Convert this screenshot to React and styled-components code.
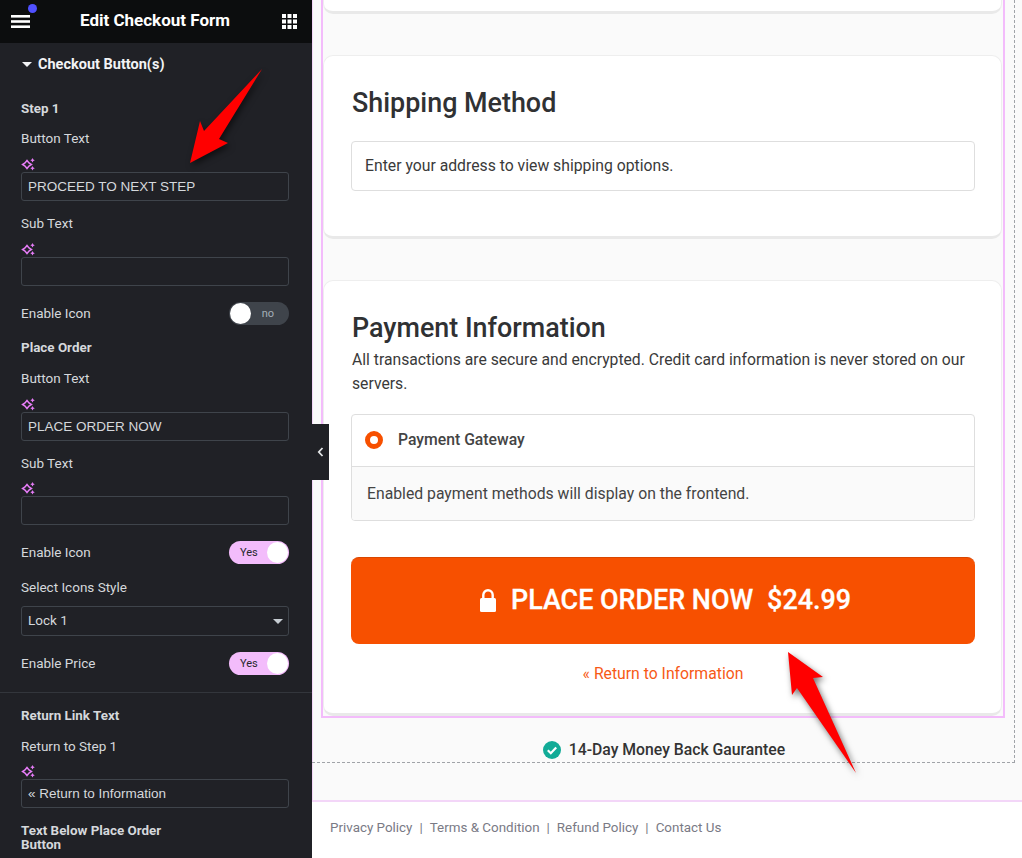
import React from "react";
import styled, { createGlobalStyle } from "styled-components";

const Global = createGlobalStyle`
  html, body { margin: 0; padding: 0; background: #fff; }
  body { font-family: Roboto, "Liberation Sans", sans-serif; }
  * { box-sizing: border-box; }
`;
const Page = styled.div`
  position: relative; display: flex; width: 1022px; height: 858px; overflow: hidden;
`;
const Sidebar = styled.aside`
  width: 312px; flex: none; height: 858px; background: #202126; color: #d5d8dc; font-size: 13.5px;
`;
const Header = styled.header`
  height: 43px; background: #0c0d0e; position: relative;
  display: flex; align-items: center; justify-content: space-between; padding: 0 15px 0 11px;
`;
const HeaderTitle = styled.h1`
  margin: 0 2px 4px 0; font-size: 17px; font-weight: 700; color: #fff; line-height: 40px;
`;
const Dot = styled.span`
  position: absolute; left: 27.5px; top: 3.5px; width: 9px; height: 9px; border-radius: 50%; background: #5050ff;
`;
const Controls = styled.div`
  padding: 0 23px 0 21px;
`;
const SectionTitle = styled.div`
  display: flex; align-items: center; gap: 6px; height: 16px; margin-top: 13px;
  font-size: 14.5px; font-weight: 700; color: #f2f3f5;
`;
const Caret = styled.span`
  width: 0; height: 0; border-left: 5px solid transparent; border-right: 5px solid transparent; border-top: 5px solid #f2f3f5; margin-left: 1px;
`;
const Heading = styled.div`
  font-size: 13.4px; font-weight: 700; line-height: 14px; color: #d5d8dc; margin-top: ${p => p.$mt}px;
`;
const Label = styled.div`
  font-size: 13.5px; line-height: 16px; color: #d5d8dc; margin-top: ${p => p.$mt}px;
`;
const SparkRow = styled.div`
  height: 14px; margin-top: ${p => p.$mt}px; display: flex; align-items: center;
`;
const Input = styled.input`
  display: block; width: 100%; height: 29px; margin: 1px 0 0; padding: 0 6px;
  background: transparent; border: 1px solid #3f444b; border-radius: 3px; outline: none;
  font: 13.5px "Liberation Sans", Arial, sans-serif; color: #d5d8dc;
`;
const Switcher = styled.div`
  display: flex; align-items: center; justify-content: space-between; height: 23px; margin-top: ${p => p.$mt}px;
`;
const SwitchLabel = styled.span`
  padding-bottom: 2px;
`;
const Toggle = styled.div`
  width: 60px; height: 23px; border-radius: 12px; padding: 1px; display: flex; align-items: center;
  flex-direction: ${p => (p.$on ? "row" : "row-reverse")}; justify-content: space-between;
  background: ${p => (p.$on ? "#f3bcfb" : "#3f444b")};
`;
const ToggleText = styled.span`
  font-size: 11px; color: ${p => (p.$on ? "#26292c" : "#a4afb7")};
  margin: ${p => (p.$on ? "0 0 0 10px" : "0 14px 0 0")};
`;
const Knob = styled.span`
  width: 21px; height: 21px; border-radius: 50%; background: #fff;
`;
const SelectBox = styled.div`
  height: 30px; margin-top: 11px; border: 1px solid #3f444b; border-radius: 3px; padding: 0 6px 2px;
  display: flex; align-items: center; justify-content: space-between; color: #d5d8dc; font-size: 13.5px;
`;
const SelectCaret = styled.span`
  width: 0; height: 0; border-left: 5px solid transparent; border-right: 5px solid transparent; border-top: 5px solid #c6ccd2; margin: 2px -1px 0 0;
`;
const Divider = styled.hr`
  margin: 17px 0 0; border: 0; border-top: 1px solid #33363c;
`;
const CollapseTab = styled.div`
  position: absolute; left: 312px; top: 424px; width: 17px; height: 56px; background: #202126;
  display: flex; align-items: center; justify-content: center; z-index: 2;
`;
const Main = styled.main`
  flex: 1; display: flex; flex-direction: column; height: 858px;
`;
const Canvas = styled.div`
  height: 802px; flex: none; background: #fafafa; border-bottom: 2px solid #f3d6f8;
  box-shadow: inset 1px 0 0 #f3d6f8;
`;
const DashedArea = styled.div`
  width: 703px; height: 763px; border-right: 1px dashed #a0a3a8; border-bottom: 1px dashed #a0a3a8;
  padding-left: 9px;
`;
const PinkFrame = styled.div`
  width: 684px; height: 718px; border: 2px solid #f3bcfb; border-top: 0; padding-right: 1px; display: flex; flex-direction: column;
  background: #fafafa;
`;
const Card = styled.section`
  background: #fff; border: 1px solid #eeeeee; border-bottom: 3px solid #e9e9e9; border-radius: 10px;
  padding: 0 26px 0 27px; height: ${p => p.$h}px; margin-top: ${p => p.$mt}px; flex: none;
`;
const CutCard = styled(Card)`
  border-top: 0; border-radius: 0 0 10px 10px;
`;
const CardTitle = styled.h2`
  margin: 31px 0 0 1px; font-size: 26.9px; font-weight: 500; color: #303133; line-height: 32px;
`;
const NoticeBox = styled.div`
  height: 50px; margin-top: 22px; border: 1px solid #dedede; border-radius: 4px; padding: 0 13px 2px;
  display: flex; align-items: center; font-size: 15.75px; color: #3a3a3a;
`;
const Lead = styled.p`
  margin: 4px 0 0 1px; font-size: 15.72px; line-height: 24px; color: #3a3a3a;
`;
const GatewayBox = styled.div`
  height: 107px; margin-top: 18px; border: 1px solid #dedede; border-radius: 4px; overflow: hidden;
`;
const GatewayHead = styled.div`
  height: 52px; display: flex; align-items: center; padding: 0 13px 2px; gap: 15px; border-bottom: 1px solid #dedede;
  font-size: 15.75px; font-weight: 500; color: #444;
`;
const Radio = styled.span`
  width: 18px; height: 18px; border-radius: 50%; border: 5.5px solid #f75000; background: #fff; flex: none;
`;
const GatewayBody = styled.div`
  height: 54px; background: #fafafa; display: flex; align-items: center; padding: 0 15px 2px; font-size: 15.75px; color: #444;
`;
const PlaceButton = styled.button`
  display: flex; align-items: center; justify-content: center; gap: 15px; width: 100%; height: 87px; margin-top: 36px;
  background: #f75000; border: 0; border-top: 1px solid #d94600; border-radius: 8px; color: #fff;
  font: 500 26.9px Roboto, sans-serif; -webkit-text-stroke: .3px #fff; padding: 0 0 2px 5px; white-space: pre;
`;
const Price = styled.span`
  margin-left: -1px;
`;
const ReturnLink = styled.div`
  margin-top: 20px; text-align: center; font-size: 15.75px; line-height: 20px; color: #f75a16;
`;
const Guarantee = styled.div`
  display: flex; align-items: center; justify-content: center; gap: 8px; margin: 22px 0 0 -9px; width: 703px; padding-left: 1px;
  font-size: 15.75px; font-weight: 500; color: #333; line-height: 20px;
`;
const Footer = styled.footer`
  flex: 1; background: #fff; padding: 16px 18px; font-size: 13.4px; line-height: 20px; color: #7a7a85;
  display: flex; gap: 7px;
`;
const ArrowLayer = styled.svg`
  position: absolute; left: 0; top: 0; width: 1022px; height: 858px; pointer-events: none; z-index: 3;
  filter: drop-shadow(2px 3px 3px rgba(0,0,0,.55));
`;

const Spark = () => (
  <svg width="15" height="14" viewBox="0 0 15 14">
    <path d="M6 3.5 L8 6 L10.4 7.5 L8 9 L6 11.5 L4 9 L1.6 7.5 L4 6 Z" fill="none" stroke="#e57cf6" strokeWidth="1.5" />
    <path d="M11.5 1 L12.3 2.5 L13.8 3.2 L12.3 4 L11.5 5.4 L10.7 4 L9.3 3.2 L10.7 2.5 Z" fill="#e57cf6" />
    <path d="M11.5 9 L12.3 10.4 L13.8 11.2 L12.3 12 L11.5 13.4 L10.7 12 L9.3 11.2 L10.7 10.4 Z" fill="#e57cf6" />
  </svg>
);
const Burger = () => (
  <svg width="19" height="13" viewBox="0 0 19 13" aria-hidden="true">
    <rect y="0" width="19" height="2.6" fill="#fff" />
    <rect y="5.2" width="19" height="2.6" fill="#fff" />
    <rect y="10.4" width="19" height="2.6" fill="#fff" />
  </svg>
);
const Grid = () => (
  <svg width="15" height="15" viewBox="0 0 15 15" aria-hidden="true">
    {[0, 5.5, 11].flatMap(y => [0, 5.5, 11].map(x => <rect key={`${x}-${y}`} x={x} y={y} width="4" height="4" fill="#fff" />))}
  </svg>
);
const Field = ({ label, mt, sparkMt, value }) => (
  <>
    <Label $mt={mt}>{label}</Label>
    <SparkRow $mt={sparkMt}><Spark /></SparkRow>
    <Input readOnly defaultValue={value} aria-label={label} />
  </>
);
const Switch = ({ label, on, mt }) => (
  <Switcher $mt={mt}>
    <SwitchLabel>{label}</SwitchLabel>
    <Toggle $on={on}><ToggleText $on={on}>{on ? "Yes" : "no"}</ToggleText><Knob /></Toggle>
  </Switcher>
);
const GuaranteeRow = () => (
  <Guarantee>
    <svg width="18" height="18" viewBox="0 0 18 18" aria-hidden="true">
      <circle cx="9" cy="9" r="9" fill="#12ab97" />
      <path d="M4.8 9.3 L7.8 12.2 L13.2 6.5" fill="none" stroke="#fff" strokeWidth="2.2" />
    </svg>
    14-Day Money Back Gaurantee
  </Guarantee>
);

export default function App() {
  return (
    <Page>
      <Global />
      <Sidebar>
        <Header>
          <Burger />
          <Dot />
          <HeaderTitle>Edit Checkout Form</HeaderTitle>
          <Grid />
        </Header>
        <Controls>
          <SectionTitle><Caret />Checkout Button(s)</SectionTitle>
          <Heading $mt={30}>Step 1</Heading>
          <Field label="Button Text" mt={14} sparkMt={11} value="PROCEED TO NEXT STEP" />
          <Field label="Sub Text" mt={14} sparkMt={11} value="" />
          <Switch label="Enable Icon" mt={16} />
          <Heading $mt={16}>Place Order</Heading>
          <Field label="Button Text" mt={15} sparkMt={11} value="PLACE ORDER NOW" />
          <Field label="Sub Text" mt={14} sparkMt={10} value="" />
          <Switch label="Enable Icon" on mt={16} />
          <Label $mt={15}>Select Icons Style</Label>
          <SelectBox>Lock 1<SelectCaret /></SelectBox>
          <Switch label="Enable Price" on mt={16} />
        </Controls>
        <Divider />
        <Controls>
          <Heading $mt={16}>Return Link Text</Heading>
          <Field label="Return to Step 1" mt={15} sparkMt={10} value="« Return to Information" />
          <Heading $mt={16}>Text Below Place Order<br />Button</Heading>
        </Controls>
      </Sidebar>
      <CollapseTab>
        <svg width="7" height="10" viewBox="0 0 7 10"><path d="M5.5 1 L1.8 5 L5.5 9" fill="none" stroke="#e4e6e8" strokeWidth="1.8" /></svg>
      </CollapseTab>
      <Main>
        <Canvas>
          <DashedArea>
            <PinkFrame>
              <CutCard $h={14} $mt={0} />
              <Card $h={184} $mt={41}>
                <CardTitle>Shipping Method</CardTitle>
                <NoticeBox>Enter your address to view shipping options.</NoticeBox>
              </Card>
              <Card $h={436} $mt={41}>
                <CardTitle>Payment Information</CardTitle>
                <Lead>All transactions are secure and encrypted. Credit card information is never stored on our servers.</Lead>
                <GatewayBox>
                  <GatewayHead><Radio />Payment Gateway</GatewayHead>
                  <GatewayBody>Enabled payment methods will display on the frontend.</GatewayBody>
                </GatewayBox>
                <PlaceButton>
                  <svg width="16" height="23" viewBox="0 0 16 23" aria-hidden="true">
                    <path d="M3.3 10 V6 a4.7 4.7 0 0 1 9.4 0 V10" fill="none" stroke="#fff" strokeWidth="2.4" />
                    <rect y="9" width="16" height="14" rx="1.5" fill="#fff" />
                  </svg>
                  <span>PLACE ORDER NOW</span>
                  <Price>$24.99</Price>
                </PlaceButton>
                <ReturnLink>« Return to Information</ReturnLink>
              </Card>
            </PinkFrame>
            <GuaranteeRow />
          </DashedArea>
        </Canvas>
        <Footer>
          <span>Privacy Policy</span><span>|</span><span>Terms &amp; Condition</span><span>|</span><span>Refund Policy</span><span>|</span><span>Contact Us</span>
        </Footer>
      </Main>
      <ArrowLayer viewBox="0 0 1022 858" aria-hidden="true">
        <path d="M262 69 L204 131 L200 121 L190 163 L228 143 L219 139 Z" fill="#ff0000" />
        <path d="M788 652 L823 677 L813 678 L856 773 L797 688 L792 695 Z" fill="#ff0000" />
      </ArrowLayer>
    </Page>
  );
}
